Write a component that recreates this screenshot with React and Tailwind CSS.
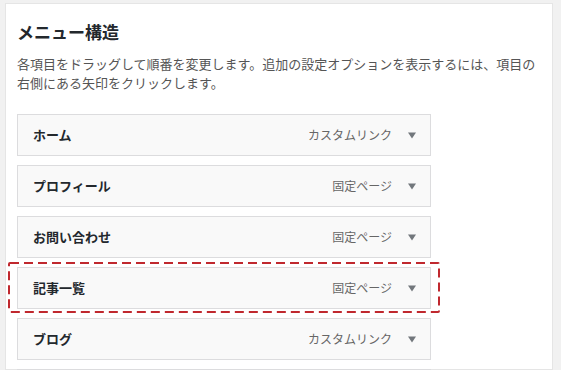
const items = [
  { label: "ホーム", type: "カスタムリンク" },
  { label: "プロフィール", type: "固定ページ" },
  { label: "お問い合わせ", type: "固定ページ" },
  { label: "記事一覧", type: "固定ページ", highlight: true },
  { label: "ブログ", type: "カスタムリンク" },
  { label: "", type: "" },
];

function Arrow() {
  return (
    <svg width="8" height="7" viewBox="0 0 8 7" className="shrink-0">
      <path d="M0 0.5 H8 L4 6.5 Z" fill="#72777c" />
    </svg>
  );
}

function MenuItem({ item }) {
  return (
    <div className="relative">
      <div className="flex h-[42px] w-[414px] items-center justify-between border border-[#dcdcde] bg-[#f9f9f9] pl-[15px] pr-[14px]">
        <span className="text-[13px] font-bold text-[#23282d]">{item.label}</span>
        {item.type && (
          <div className="flex items-center gap-[16px]">
            <span className="text-[12px] text-[#666]">{item.type}</span>
            <Arrow />
          </div>
        )}
      </div>
      {item.highlight && (
        <svg
          className="pointer-events-none absolute left-[-9px] top-[-5px]"
          width="432"
          height="51"
          viewBox="0 0 432 51"
        >
          <rect
            x="1"
            y="1"
            width="430"
            height="49"
            rx="1"
            fill="none"
            stroke="#c0282e"
            strokeWidth="2"
            strokeDasharray="9 5"
          />
        </svg>
      )}
    </div>
  );
}

export default function App() {
  return (
    <div
      className="h-[370px] overflow-hidden bg-[#f1f1f1] pl-[5px] pr-[8px] pt-[3px]"
      style={{ fontFamily: '"Noto Sans CJK JP", "Noto Sans", sans-serif' }}
    >
      <div className="h-full border border-[#e5e5e5] bg-white pl-[11px] pt-[16px]">
        <h2 className="text-[17px] font-bold leading-[24px] text-[#23282d]">
          メニュー構造
        </h2>
        <p className="mt-[10px] pr-[8px] text-[13px] leading-[19px] text-[#555]">
          各項目をドラッグして順番を変更します。追加の設定オプションを表示するには、項目の右側にある矢印をクリックします。
        </p>
        <div className="mt-[22px] flex flex-col gap-[9px]">
          {items.map((item, i) => (
            <MenuItem key={i} item={item} />
          ))}
        </div>
      </div>
    </div>
  );
}
